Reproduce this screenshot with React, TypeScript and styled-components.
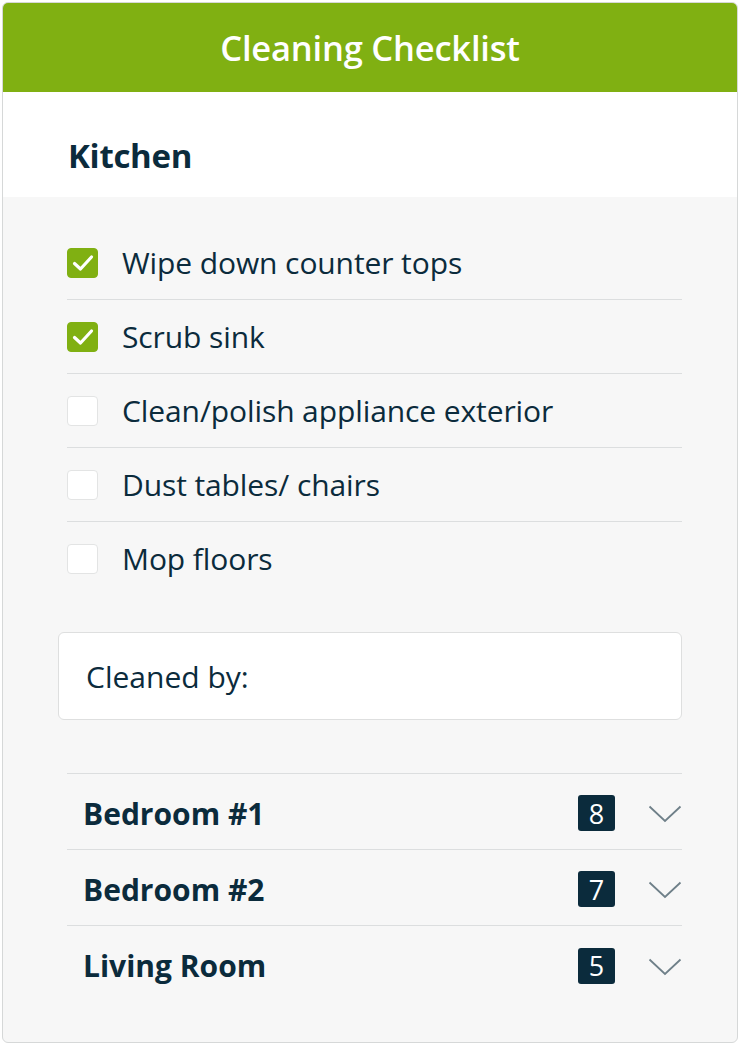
import styled, { createGlobalStyle } from "styled-components";

const navy = "#0b2b3c";
const green = "#80b012";
const line = "#dcdedf";

const GlobalStyle = createGlobalStyle`
  body {
    margin: 0;
    background: #ffffff;
    font-family: "Open Sans", "Noto Sans", sans-serif;
    color: ${navy};
  }
`;

const kitchenTasks = [
  { label: "Wipe down counter tops", done: true },
  { label: "Scrub sink", done: true },
  { label: "Clean/polish appliance exterior", done: false },
  { label: "Dust tables/ chairs", done: false },
  { label: "Mop floors", done: false },
];

const rooms = [
  { name: "Bedroom #1", count: 8 },
  { name: "Bedroom #2", count: 7 },
  { name: "Living Room", count: 5 },
];

export default function App() {
  return (
    <>
      <GlobalStyle />
      <Card>
        <Header>Cleaning Checklist</Header>
        <SectionTitle>Kitchen</SectionTitle>
        <Body>
          <TaskList>
            {kitchenTasks.map((task) => (
              <Task key={task.label}>
                <Box $checked={task.done}>
                  {task.done && (
                    <svg width="22" height="18" viewBox="0 0 22 18">
                      <path
                        d="M2.5 9.5 L8.5 15 L19.5 3"
                        fill="none"
                        stroke="#fff"
                        strokeWidth="3.2"
                        strokeLinecap="round"
                        strokeLinejoin="round"
                      />
                    </svg>
                  )}
                </Box>
                <TaskLabel>{task.label}</TaskLabel>
              </Task>
            ))}
          </TaskList>

          <CleanedBy>Cleaned by:</CleanedBy>

          <Rooms>
            {rooms.map((room) => (
              <Room key={room.name}>
                <RoomName>{room.name}</RoomName>
                <Badge>{room.count}</Badge>
                <Chevron width="34" height="18" viewBox="0 0 34 18">
                  <path
                    d="M1.5 1.5 L17 16 L32.5 1.5"
                    fill="none"
                    stroke="#6f8089"
                    strokeWidth="1.8"
                  />
                </Chevron>
              </Room>
            ))}
          </Rooms>
        </Body>
      </Card>
    </>
  );
}

const Card = styled.div`
  margin: 2px;
  border: 1px solid #d6d8d8;
  border-radius: 6px;
  overflow: hidden;
  background: #f7f7f7;
`;

const Header = styled.div`
  height: 89px;
  display: flex;
  align-items: center;
  justify-content: center;
  background: ${green};
  color: #fff;
  font-size: 34.5px;
  font-weight: 600;
  letter-spacing: -0.2px;
`;

const SectionTitle = styled.h2`
  margin: 0;
  height: 105px;
  box-sizing: border-box;
  padding: 22px 0 0 65px;
  display: flex;
  align-items: center;
  background: #fff;
  font-size: 33px;
  font-weight: 700;
  letter-spacing: -0.3px;
`;

const Body = styled.div`
  padding: 29px 55px 40px 64px;
`;

const TaskList = styled.div`
  display: flex;
  flex-direction: column;
`;

const Task = styled.label`
  display: flex;
  align-items: center;
  gap: 24px;
  height: 73px;
  border-bottom: 1px solid ${line};

  &:last-child {
    border-bottom: none;
  }
`;

const Box = styled.span<{ $checked: boolean }>`
  flex: none;
  width: 31px;
  height: 30px;
  box-sizing: border-box;
  border-radius: 4px;
  display: flex;
  align-items: center;
  justify-content: center;
  background: ${(p) => (p.$checked ? green : "#fff")};
  border: 1px solid ${(p) => (p.$checked ? green : "#e3e4e4")};
`;

const TaskLabel = styled.span`
  font-size: 30px;
  letter-spacing: -0.1px;
`;

const CleanedBy = styled.div`
  margin: 37px 0 0 -9px;
  height: 88px;
  box-sizing: border-box;
  display: flex;
  align-items: center;
  padding-left: 27px;
  background: #fff;
  border: 1px solid #dedfdf;
  border-radius: 6px;
  font-size: 30px;
`;

const Rooms = styled.div`
  margin-top: 53px;
  border-top: 1px solid ${line};
`;

const Room = styled.div`
  display: flex;
  align-items: center;
  height: 76px;
  padding: 3px 0 0 16px;
  box-sizing: border-box;
  border-bottom: 1px solid ${line};

  &:last-child {
    border-bottom: none;
  }
`;

const RoomName = styled.span`
  flex: 1;
  font-size: 30px;
  font-weight: 700;
`;

const Badge = styled.span`
  width: 37px;
  height: 36px;
  border-radius: 3px;
  display: flex;
  align-items: center;
  justify-content: center;
  background: ${navy};
  color: #fff;
  font-size: 27px;
`;

const Chevron = styled.svg`
  margin-left: 33px;
  margin-top: 2px;
`;
